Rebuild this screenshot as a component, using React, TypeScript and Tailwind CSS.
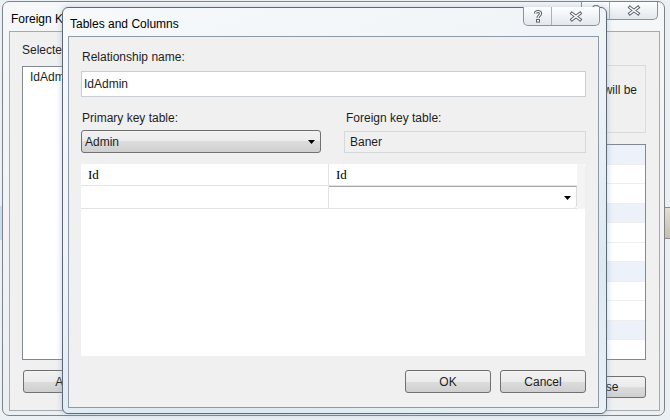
const btn =
  "flex items-center justify-center rounded-[3px] border border-[#707070] bg-[linear-gradient(#f2f2f2_0%,#ebebeb_50%,#dddddd_50%,#cfcfcf_100%)] text-[12px] text-[#1e1e1e]";

function HelpGlyph() {
  return (
    <svg width="10" height="14" viewBox="0 0 10 14">
      <path d="M2.5 4.5C2.5 1.8 7.5 1.8 7.5 4.5C7.5 6.6 5 6.6 5 9" fill="none" stroke="#5d6670" strokeWidth="3.2" />
      <path d="M2.5 4.5C2.5 1.8 7.5 1.8 7.5 4.5C7.5 6.6 5 6.6 5 9" fill="none" stroke="#ffffff" strokeWidth="1.2" />
      <rect x="3.5" y="10.5" width="3" height="2.6" fill="#ffffff" stroke="#5d6670" strokeWidth="1" />
    </svg>
  );
}

function CloseGlyph() {
  return (
    <svg width="14" height="11" viewBox="0 0 14 11">
      <path d="M3 2.5L11 8.5M11 2.5L3 8.5" stroke="#5d6670" strokeWidth="3.4" strokeLinecap="square" />
      <path d="M3 2.5L11 8.5M11 2.5L3 8.5" stroke="#ffffff" strokeWidth="1.4" strokeLinecap="square" />
    </svg>
  );
}

function Arrow() {
  return (
    <svg width="7" height="4" viewBox="0 0 7 4">
      <path d="M0 0h7L3.5 4z" fill="#000" />
    </svg>
  );
}

function CaptionButtons({ height }: { height: string }) {
  return (
    <div
      className={`flex ${height} overflow-hidden rounded-b-[5px] border border-t-0 border-[#8a939c] bg-[linear-gradient(#fdfeff,#e3e8ed)]`}
    >
      <div className="flex w-[28px] items-center justify-center border-r border-[#a9b1b9]">
        <HelpGlyph />
      </div>
      <div className="flex w-[47px] items-center justify-center">
        <CloseGlyph />
      </div>
    </div>
  );
}

// background window, mostly covered by the dialog
function OuterWindow() {
  const rows = Array.from({ length: 11 }, (_, i) => i);
  return (
    <div className="absolute left-[2px] top-[1px] flex h-[415px] w-[663px] flex-col rounded-[7px] border border-[#7d8389] bg-[linear-gradient(#f6f7f9,#eceff2)]">
      <div className="flex h-[29px] items-start justify-between">
        <span className="pl-[8px] pt-[8px] text-[12px] text-black">Foreign Key Relationships</span>
        <div className="mr-[6px]">
          <CaptionButtons height="h-[18px]" />
        </div>
      </div>
      <div className="mb-[4px] ml-[6px] mr-[4px] flex flex-1 justify-between border border-[#a2aab2] bg-[#f0f0f0]">
        <div className="flex flex-col pl-[12px] pt-[11px]">
          <span className="leading-[15px]">Selected Relationship:</span>
          <div className="mt-[8px] h-[294px] w-[260px] border border-[#828790] bg-white px-[7px] pt-[2px] leading-[16px]">
            IdAdmin
          </div>
          <button className={`${btn} ml-[1px] mt-[10px] h-[23px] w-[86px]`}>Add</button>
        </div>
        <div className="flex flex-col items-end pr-[13px] pt-[33px]">
          <div className="h-[68px] w-[150px] border border-[#dadada] pr-[8px] pt-[17px] text-right leading-[15px]">
            relationship will be
          </div>
          <div className="mt-[11px] h-[216px] w-[140px] overflow-hidden border border-[#828790] bg-white">
            {rows.map((i) => (
              <div
                key={i}
                className={`h-[19.5px] border-b border-[#eeeeee] ${i % 3 === 0 ? "bg-[#edf1f9]" : "bg-white"}`}
              />
            ))}
          </div>
          <button className={`${btn} mt-[16px] h-[22px] w-[86px]`}>Close</button>
        </div>
      </div>
    </div>
  );
}

function InnerDialog() {
  return (
    <div className="absolute left-[62px] top-[7px] flex h-[407px] w-[545px] flex-col rounded-[6px] border border-[#5f6973] bg-[linear-gradient(160deg,#f7f9fb_0%,#eef3f7_45%,#dce9f2_75%,#e9f1f6_100%)] shadow-[0_0_6px_rgba(120,160,190,0.45)]">
      <div className="flex h-[28px] items-start justify-between">
        <span className="pl-[7px] pt-[7px] text-[12px] text-black">Tables and Columns</span>
        <div className="mr-[6px] -mt-px">
          <CaptionButtons height="h-[19px]" />
        </div>
      </div>
      <div className="mb-[5px] ml-[5px] mr-[7px] flex flex-1 flex-col border border-[#8e9aa5] bg-[#f0f0f0] px-[12px] pt-[13px]">
        <span className="pl-px leading-[15px]">Relationship name:</span>
        <div className="mt-[6px] flex h-[26px] items-center border border-[#c9ced3] bg-white pl-[2px]">IdAdmin</div>

        <div className="mt-[14px] flex gap-[23px]">
          <div className="flex w-[240px] flex-col">
            <span className="pl-px leading-[15px]">Primary key table:</span>
            <div className="mt-[4px] flex h-[23px] items-center justify-between rounded-[3px] border border-[#707070] bg-[linear-gradient(#f2f2f2_0%,#ebebeb_50%,#dddddd_50%,#cfcfcf_100%)] pl-[3px] pr-[5px]">
              <span>Admin</span>
              <Arrow />
            </div>
          </div>
          <div className="flex w-[242px] flex-col">
            <span className="pl-[2px] leading-[15px]">Foreign key table:</span>
            <div className="mt-[5px] flex h-[22px] items-center border border-[#d6d9dc] bg-[#f0f0f0] pl-[5px]">Baner</div>
          </div>
        </div>

        <div className="mt-[11px] h-[192px] w-[504px] bg-white font-['Liberation_Serif',serif] text-[13px] text-black">
          <div className="flex">
            <div className="flex w-[496px] flex-col">
              <div className="flex h-[22px] border-b border-[#e3e3e3]">
                <div className="flex w-[248px] items-center border-r border-[#e3e3e3] pl-[7px]">Id</div>
                <div className="flex flex-1 items-center pl-[7px]">Id</div>
              </div>
              <div className="flex h-[23px] border-b border-[#e3e3e3]">
                <div className="w-[248px] border-r border-[#e3e3e3]" />
                <div className="flex flex-1 items-center justify-end rounded-br-[3px] border-t border-r border-[#a7a7a7] border-r-[#dcdcdc] pr-[5px]">
                  <Arrow />
                </div>
              </div>
            </div>
            <div className="h-[45px] flex-1 rounded-tr-[3px] bg-[#f4f4f4]" />
          </div>
        </div>

        <div className="mt-[14px] flex justify-end gap-[9px]">
          <button className={`${btn} h-[23px] w-[86px]`}>OK</button>
          <button className={`${btn} h-[23px] w-[86px]`}>Cancel</button>
        </div>
      </div>
    </div>
  );
}

export default function App() {
  return (
    <div className="relative h-[420px] w-[670px] overflow-hidden bg-[#eaf0f4] font-['Liberation_Sans',Arial,sans-serif] text-[12px] text-[#1e1e1e]">
      <div className="absolute left-0 top-[206px] h-[34px] w-[3px] bg-[#c9dcec]" />
      <div className="absolute left-[663px] top-[207px] h-[32px] w-[10px] border border-[#8a8a8a] bg-[linear-gradient(#e4ded2,#c7bfae)]" />
      <OuterWindow />
      <InnerDialog />
    </div>
  );
}
